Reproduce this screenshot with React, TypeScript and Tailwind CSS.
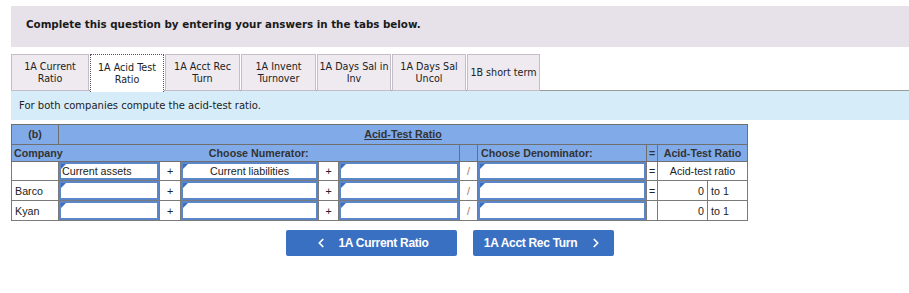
import { ChevronLeft, ChevronRight } from 'lucide-react';

const tabs = [
  ['1A Current', 'Ratio'],
  ['1A Acid Test', 'Ratio'],
  ['1A Acct Rec', 'Turn'],
  ['1A Invent', 'Turnover'],
  ['1A Days Sal in', 'Inv'],
  ['1A Days Sal', 'Uncol'],
  ['1B short term'],
];
const tabWidths = [78, 74, 75, 75, 74, 74, 73];

function InputCell({ text, center, h }: { text?: string; center?: boolean; h: number }) {
  return (
    <td className="p-0 border border-[#7a7a7a] bg-white">
      <div
        style={{ height: h }}
        className={`relative border-2 border-[#5b86c9] flex items-center px-[1px] ${center ? 'justify-center' : ''}`}
      >
        <span className="absolute left-0 top-0 w-0 h-0 border-t-[5px] border-r-[5px] border-t-[#3b6fc4] border-r-transparent" />
        {text}
      </div>
    </td>
  );
}

function DataRow({ name, eq }: { name: string; eq: boolean }) {
  const cell = 'border border-[#7a7a7a] bg-white text-center p-0';
  return (
    <tr className="h-[20px]">
      <td className="border border-[#7a7a7a] bg-white pl-[3px] text-left p-0">{name}</td>
      <InputCell h={19} />
      <td className={cell}>+</td>
      <InputCell h={19} />
      <td className={cell}>+</td>
      <InputCell h={19} />
      <td className={`${cell} text-[#9a7a5a]`}>/</td>
      <InputCell h={19} />
      <td className={cell}>{eq ? '=' : ''}</td>
      <td className="border border-[#7a7a7a] bg-white text-right pr-[3px] p-0">0</td>
      <td className="border border-[#7a7a7a] bg-white text-left pl-[3px] p-0">to 1</td>
    </tr>
  );
}

export default function App() {
  const cell = 'border border-[#7a7a7a] bg-white text-center p-0';
  return (
    <div className="w-[909px] h-[293px] bg-white overflow-hidden text-[#222]" style={{ fontFamily: '"DejaVu Sans", Verdana, sans-serif' }}>
      <div className="mt-[6px] ml-[11px] h-[41px] bg-[#e7e1e9] pl-[15px] pt-[11px] text-[10.3px] font-bold text-[#1a1a1a]">
        Complete this question by entering your answers in the tabs below.
      </div>

      <div className="mt-[7px] ml-[11px] flex items-end h-[37px] relative">
        <div className="absolute left-0 right-0 bottom-0 h-[1px] bg-[#9a9a9a]" />
        {tabs.map((t, i) => (
          <div
            key={i}
            style={{ width: tabWidths[i] }}
            className={`relative h-[37px] mr-[1px] flex flex-col items-center justify-center text-[9.6px] leading-[12px] text-[#222] whitespace-nowrap ${
              i === 1
                ? 'bg-white border border-dotted border-[#555] border-b-0 z-10 h-[38px] -mb-[1px]'
                : 'bg-[#efeaf0] border border-[#c4bcc6]'
            }`}
          >
            {t.map((line, j) => (
              <span key={j}>{line}</span>
            ))}
          </div>
        ))}
      </div>

      <div className="ml-[11px] h-[29px] bg-[#d7ecf9] pl-[8px] pt-[7px] text-[10px] text-[#222]">
        For both companies compute the acid-test ratio.
      </div>

      <table
        className="mt-[4px] ml-[11px] border-collapse table-fixed text-[10.7px] text-[#222]"
        style={{ fontFamily: '"Liberation Sans", Arial, sans-serif', width: 736 }}
      >
        <colgroup>
          <col className="w-[47px]" />
          <col className="w-[101px]" />
          <col className="w-[21px]" />
          <col className="w-[138px]" />
          <col className="w-[20px]" />
          <col className="w-[121px]" />
          <col className="w-[18px]" />
          <col className="w-[169px]" />
          <col className="w-[11px]" />
          <col className="w-[50px]" />
          <col className="w-[40px]" />
        </colgroup>
        <tbody>
          <tr className="h-[20px] bg-[#80abe8] font-bold text-[#333]">
            <td className="border border-[#6f6f6f] text-center p-0">(b)</td>
            <td colSpan={10} className="border border-[#6f6f6f] text-center p-0">
              <span className="underline">Acid-Test Ratio</span>
            </td>
          </tr>
          <tr className="h-[17px] bg-[#80abe8] font-bold text-[#333]">
            <td className="border border-[#6f6f6f] border-r-0 pl-[2px] overflow-visible whitespace-nowrap p-0">
              Company
            </td>
            <td colSpan={5} className="border border-[#6f6f6f] border-l-0 text-center p-0">
              Choose Numerator:
            </td>
            <td className="border border-[#6f6f6f] p-0" />
            <td className="border border-[#6f6f6f] text-left pl-[3px] p-0">Choose Denominator:</td>
            <td className="border border-[#6f6f6f] text-center p-0">=</td>
            <td colSpan={2} className="border border-[#6f6f6f] text-center p-0">
              Acid-Test Ratio
            </td>
          </tr>
          <tr className="h-[19px]">
            <td className={cell} />
            <InputCell h={18} text="Current assets" />
            <td className={cell}>+</td>
            <InputCell h={18} text="Current liabilities" center />
            <td className={cell}>+</td>
            <InputCell h={18} />
            <td className={`${cell} text-[#9a7a5a]`}>/</td>
            <InputCell h={18} />
            <td className={cell}>=</td>
            <td colSpan={2} className={cell}>
              Acid-test ratio
            </td>
          </tr>
          <DataRow name="Barco" eq />
          <DataRow name="Kyan" eq={false} />
        </tbody>
      </table>

      <div
        className="mt-[9px] ml-[286px] flex gap-[16px] text-[12px] font-bold text-white"
        style={{ fontFamily: '"Liberation Sans", Arial, sans-serif' }}
      >
        <button className="w-[171px] h-[26px] bg-[#3a70c2] rounded-[2px] flex items-center justify-center gap-[10px]">
          <ChevronLeft size={14} strokeWidth={3} />
          <span className="tracking-[-0.3px]">1A Current Ratio</span>
        </button>
        <button className="w-[141px] h-[26px] bg-[#3a70c2] rounded-[2px] flex items-center justify-center gap-[12px]">
          <span className="tracking-[-0.3px]">1A Acct Rec Turn</span>
          <ChevronRight size={14} strokeWidth={3} />
        </button>
      </div>
    </div>
  );
}
